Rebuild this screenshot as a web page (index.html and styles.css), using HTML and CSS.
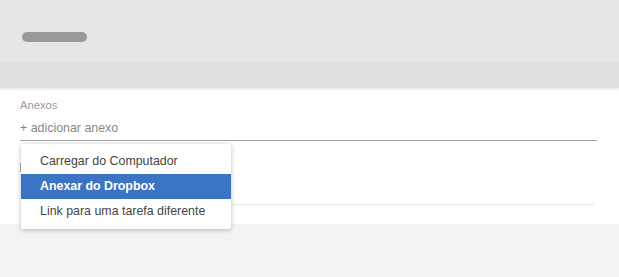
FILE: index.html
```html
<!DOCTYPE html>
<html>
<head>
  <title>Anexos</title>
  <link rel="stylesheet" href="styles.css">
</head>
<body>
  <div class="page">
    <div class="header">
      <div class="pill"></div>
    </div>
    <div class="band"></div>

    <div class="content">
      <div class="label">Anexos</div>
      <div class="add-field">+ adicionar anexo</div>
      <div class="hidden-row">
        <div class="stub"></div>
      </div>
      <div class="divider"></div>
    </div>

    <div class="footer"></div>

    <!-- attach menu -->
    <div class="menu">
      <div class="menu-item">Carregar do Computador</div>
      <div class="menu-item selected">Anexar do Dropbox</div>
      <div class="menu-item">Link para uma tarefa diferente</div>
    </div>
  </div>
</body>
</html>
```

FILE: styles.css
```css
body {
  margin: 0;
  font-family: "Liberation Sans", Arial, sans-serif;
  background-color: #f3f3f3;
}

.page {
  position: relative;
  width: 619px;
  height: 277px;
  overflow: hidden;
}

.header {
  height: 63px;
  background-color: #e6e6e6;
  padding: 32px 0 0 22px;
  box-sizing: border-box;
}

.pill {
  width: 65px;
  height: 10px;
  border-radius: 5px;
  background-color: #999;
}

.band {
  height: 25px;
  background-color: #e0e0e0;
  box-shadow: 0 1px 3px rgba(0,0,0,0.12);
  position: relative;
}

.content {
  height: 136px;
  background-color: #fff;
  padding: 11px 22px 0 20px;
  box-sizing: border-box;
}

.label {
  font-size: 11.2px;
  color: #999;
  line-height: 13px;
}

.add-field {
  margin-top: 9px;
  font-size: 12.4px;
  color: #888;
  line-height: 15px;
  padding-bottom: 4px;
  border-bottom: 1px solid #a3a3a3;
}

.hidden-row {
  height: 63px;
  padding-top: 22px;
  box-sizing: border-box;
}

.stub {
  width: 1px;
  height: 9px;
  background-color: #aaa;
}

.divider {
  margin-right: 3px;
  border-top: 1px solid #e8e8e8;
}

.footer {
  height: 53px;
  background-color: #f3f3f3;
}

.menu {
  position: absolute;
  left: 21px;
  top: 144px;
  width: 210px;
  padding: 5px 0;
  background-color: #fff;
  border-radius: 2px;
  box-shadow: 0 1px 5px rgba(0,0,0,0.25);
}

.menu-item {
  height: 25px;
  line-height: 25px;
  padding-left: 19px;
  font-size: 12.4px;
  color: #444;
}

.menu-item.selected {
  background-color: #3b74c2;
  color: #fff;
  font-weight: bold;
}
```
